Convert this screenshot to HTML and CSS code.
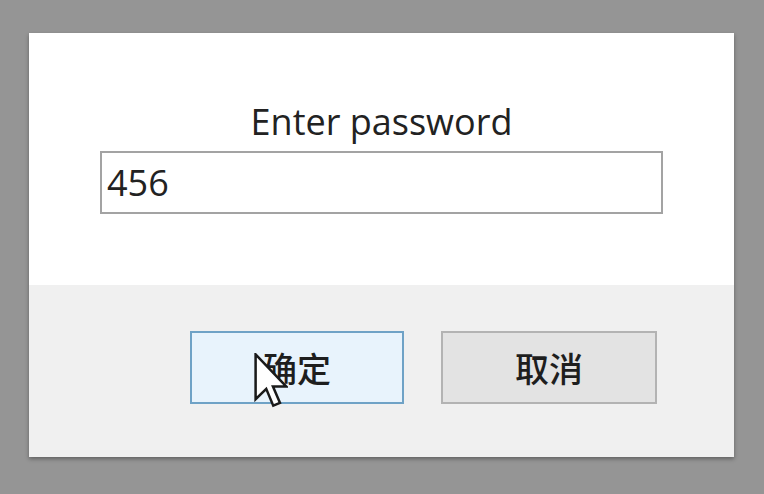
FILE: index.html
```html
<!DOCTYPE html>
<html>
<head>
<meta charset="utf-8">
<link rel="stylesheet" href="styles.css">
</head>
<body>
<div class="dialog">
  <div class="dialog-body">
    <div class="prompt">Enter password</div>
    <div class="field">456</div>
  </div>
  <div class="dialog-footer">
    <div class="btn btn-primary">确定
      <svg class="cursor" width="34" height="56" viewBox="0 0 12 20">
        <path d="M0.5 0.5 L0.5 16.5 L4.3 12.8 L6.8 18.8 L9.2 17.8 L6.7 12 L11.5 12 Z" fill="#fff" stroke="#1a1a1a" stroke-width="0.9" stroke-linejoin="miter"/>
      </svg>
    </div>
    <div class="btn">取消</div>
  </div>
</div>
</body>
</html>
```
FILE: styles.css
```css
html, body {
  margin: 0;
  padding: 0;
}
body {
  background: #959595;
  width: 764px;
  height: 494px;
  overflow: hidden;
  padding-top: 33px;
  padding-left: 29px;
  box-sizing: border-box;
  font-family: "Open Sans", "Noto Sans", sans-serif;
  color: #222;
}
.dialog {
  width: 705px;
  height: 424px;
  display: flex;
  flex-direction: column;
  box-shadow: 0 2px 4px rgba(0,0,0,0.35);
}
.dialog-body {
  background: #fff;
  height: 252px;
  display: flex;
  flex-direction: column;
  align-items: center;
  padding-top: 67px;
  box-sizing: border-box;
}
.prompt {
  font-size: 36px;
  line-height: 44px;
  margin-bottom: 7px;
}
.field {
  width: 563px;
  height: 63px;
  box-sizing: border-box;
  border: 2px solid #a3a3a3;
  padding-left: 5px;
  font-size: 36px;
  line-height: 59px;
}
.dialog-footer {
  flex: 1;
  background: #f0f0f0;
  display: flex;
  justify-content: flex-end;
  align-items: flex-start;
  gap: 37px;
  padding-top: 46px;
  padding-right: 77px;
  box-sizing: border-box;
}
.btn {
  position: relative;
  width: 216px;
  height: 73px;
  box-sizing: border-box;
  border: 2px solid #b3b3b3;
  background: #e3e3e3;
  display: flex;
  align-items: center;
  justify-content: center;
  font-family: "Noto Sans CJK SC", sans-serif;
  font-size: 34px;
  font-weight: 500;
  color: #1e1e1e;
}
.btn-primary {
  width: 214px;
  border-color: #6fa2c6;
  background: #e8f3fc;
}
.cursor {
  position: absolute;
  left: 62px;
  top: 20px;
}
```
